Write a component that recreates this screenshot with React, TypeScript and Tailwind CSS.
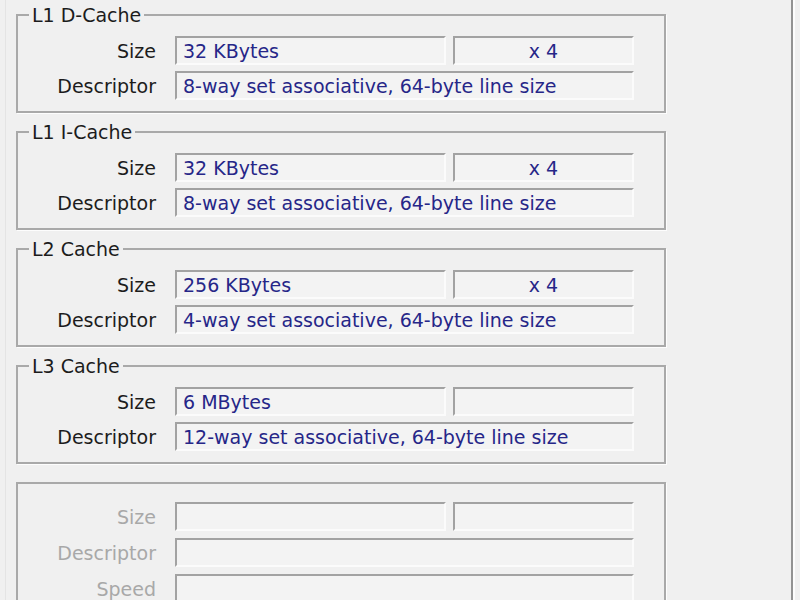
const caches = [
  {
    title: "L1 D-Cache",
    size: "32 KBytes",
    count: "x 4",
    descriptor: "8-way set associative, 64-byte line size",
  },
  {
    title: "L1 I-Cache",
    size: "32 KBytes",
    count: "x 4",
    descriptor: "8-way set associative, 64-byte line size",
  },
  {
    title: "L2 Cache",
    size: "256 KBytes",
    count: "x 4",
    descriptor: "4-way set associative, 64-byte line size",
  },
  {
    title: "L3 Cache",
    size: "6 MBytes",
    count: "",
    descriptor: "12-way set associative, 64-byte line size",
  },
];

const Field = ({ value = "", width, center = false }: { value?: string; width: string; center?: boolean }) => (
  <div
    className={`${width} h-[29px] flex items-center border-2 border-t-[#a2a2a2] border-l-[#a2a2a2] border-b-[#fbfbfb] border-r-[#fbfbfb] bg-[#f3f3f3] text-[#262688] whitespace-nowrap overflow-hidden ${
      center ? "justify-center" : "pl-[6px]"
    }`}
  >
    {value}
  </div>
);

const Row = ({ label, disabled = false, children }: { label: string; disabled?: boolean; children: React.ReactNode }) => (
  <div className="flex items-center">
    <span className={`w-[138px] text-right ${disabled ? "text-[#a8a8a8]" : "text-[#1c1c1c]"}`}>{label}</span>
    <div className="ml-[19px] flex gap-[7px]">{children}</div>
  </div>
);

const App = () => {
  return (
    <div className="w-[800px] h-[600px] overflow-hidden bg-[#f0f0f0] font-['DejaVu_Sans',sans-serif] text-[19px] leading-[22px] flex">
      {/* tab panel edges */}
      <div className="w-[5px] shrink-0" />
      <div className="w-[1px] shrink-0 bg-[#e4e4e4]" />
      <div className="w-[785px] shrink-0 pl-[10px] pt-[4px] flex flex-col gap-[8px]">
        {caches.map((c) => (
          <fieldset
            key={c.title}
            className="w-[650px] border-2 border-[#a9a9a9] shadow-[1px_1px_0_#fdfdfd] pt-[10px] pb-[11px] pr-[30px]"
          >
            <legend className="ml-[11px] px-[3px] h-[22px] text-[#1c1c1c]">{c.title}</legend>
            <div className="flex flex-col gap-[6px]">
              <Row label="Size">
                <Field value={c.size} width="w-[271px]" />
                <Field value={c.count} width="w-[181px]" center />
              </Row>
              <Row label="Descriptor">
                <Field value={c.descriptor} width="w-[459px]" />
              </Row>
            </div>
          </fieldset>
        ))}
        <fieldset className="w-[650px] border-2 border-[#a9a9a9] shadow-[1px_1px_0_#fdfdfd] pt-[8px] pb-[11px] pr-[30px]">
          <legend className="w-0 h-[22px] p-0" />
          <div className="flex flex-col gap-[7px]">
            <Row label="Size" disabled>
              <Field width="w-[271px]" />
              <Field width="w-[181px]" />
            </Row>
            <Row label="Descriptor" disabled>
              <Field width="w-[459px]" />
            </Row>
            <Row label="Speed" disabled>
              <Field width="w-[459px]" />
            </Row>
          </div>
        </fieldset>
      </div>
      <div className="w-[2px] shrink-0 bg-[#939393]" />
      <div className="w-[2px] shrink-0 bg-[#fdfdfd]" />
    </div>
  );
};

export default App;
